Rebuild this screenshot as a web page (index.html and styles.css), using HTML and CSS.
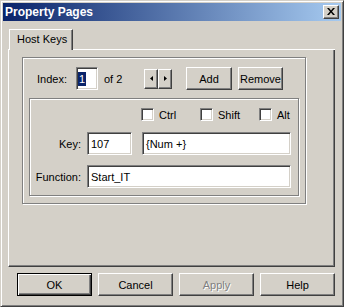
FILE: index.html
```html
<!DOCTYPE html>
<html lang="en">
<head>
    <meta charset="UTF-8">
    <title>Property Pages</title>
    <link rel="stylesheet" href="styles.css">
</head>
<body>
    <div class="window">
        <div class="titlebar">
            <span class="title">Property Pages</span>
            <div class="close-btn">
                <svg width="8" height="7" viewBox="0 0 8 7">
                    <path d="M0 0h2l2 2.5L6 0h2L5 3.5 8 7H6L4 4.5 2 7H0l3-3.5z" fill="#000"/>
                </svg>
            </div>
        </div>

        <div class="tabstrip">
            <div class="tab-edge"></div>
            <div class="tab">Host Keys</div>
            <div class="tab-fill"></div>
        </div>

        <div class="panel">
            <div class="group outer-group">
                <div class="index-row">
                    <span class="index-label">Index:</span>
                    <div class="field index-field"><span class="selected">1</span></div>
                    <span class="of-label">of 2</span>
                    <div class="spin">
                        <div class="spin-btn">
                            <svg width="3" height="5" viewBox="0 0 3 5"><path d="M3 0v5L0 2.5z" fill="#000"/></svg>
                        </div>
                        <div class="spin-btn">
                            <svg width="3" height="5" viewBox="0 0 3 5"><path d="M0 0v5l3-2.5z" fill="#000"/></svg>
                        </div>
                    </div>
                    <div class="btn add-btn">Add</div>
                    <div class="btn remove-btn">Remove</div>
                </div>

                <div class="group inner-group">
                    <div class="check-row">
                        <label class="check"><span class="box"></span>Ctrl</label>
                        <label class="check"><span class="box"></span>Shift</label>
                        <label class="check"><span class="box"></span>Alt</label>
                    </div>
                    <div class="form-row key-row">
                        <span class="form-label">Key:</span>
                        <div class="field key-field">107</div>
                        <div class="field name-field">{Num +}</div>
                    </div>
                    <div class="form-row func-row">
                        <span class="form-label">Function:</span>
                        <div class="field func-field">Start_IT</div>
                    </div>
                </div>
            </div>
        </div>

        <div class="button-row">
            <div class="btn dlg-btn default">OK</div>
            <div class="btn dlg-btn">Cancel</div>
            <div class="btn dlg-btn disabled">Apply</div>
            <div class="btn dlg-btn">Help</div>
        </div>
    </div>
</body>
</html>
```

FILE: styles.css
```css
body {
    margin: 0;
    padding: 0;
    font-family: "Liberation Sans", Arial, sans-serif;
    font-size: 11px;
    color: #000;
    background-color: #d4d0c8;
}

.window {
    width: 344px;
    height: 307px;
    box-sizing: border-box;
    background-color: #d4d0c8;
    border: 1px solid;
    border-color: #d4d0c8 #404040 #404040 #d4d0c8;
    box-shadow: inset 1px 1px #fff, inset -1px -1px #808080;
    padding: 2px;
}

.titlebar {
    height: 18px;
    display: flex;
    align-items: center;
    justify-content: space-between;
    padding: 0 2px;
    background: linear-gradient(to right, #0a246a, #a6caf0);
}

.title {
    color: #fff;
    font-weight: bold;
    font-size: 12px;
}

.close-btn {
    width: 16px;
    height: 14px;
    box-sizing: border-box;
    background-color: #d4d0c8;
    border: 1px solid;
    border-color: #fff #404040 #404040 #fff;
    box-shadow: inset -1px -1px #808080;
    display: flex;
    align-items: center;
    justify-content: center;
    padding: 0 1px 1px 0;
}

/* tabs */
.tabstrip {
    display: flex;
    margin: 8px 6px 0 5px;
    height: 21px;
}

.tab-edge {
    width: 1px;
    border-bottom: 1px solid #fff;
}

.tab {
    width: 64px;
    box-sizing: border-box;
    border: 1px solid;
    border-bottom: none;
    border-color: #fff #404040 #fff #fff;
    box-shadow: inset -1px 0 #808080;
    padding: 3px 0 0 7px;
}

.tab-fill {
    flex: 1;
    border-bottom: 1px solid #fff;
}

.panel {
    margin: 0 6px 0 5px;
    height: 217px;
    box-sizing: border-box;
    border-left: 1px solid #fff;
    border-right: 1px solid #404040;
    border-bottom: 1px solid #404040;
    box-shadow: inset -1px -1px #808080;
    padding: 7px 0 0 13px;
}

/* etched group boxes */
.group {
    box-sizing: border-box;
    border: 1px solid #808080;
    box-shadow: inset 1px 1px #fff, 1px 1px #fff;
}

.outer-group {
    width: 284px;
    height: 147px;
    padding: 9px 0 0 14px;
}

.index-row {
    display: flex;
    align-items: center;
    height: 23px;
}

.index-label {
    width: 39px;
}

.of-label {
    width: 40px;
    margin-left: 6px;
}

.spin {
    display: flex;
    height: 20px;
}

.spin-btn {
    width: 14px;
    height: 20px;
    box-sizing: border-box;
    border: 1px solid;
    border-color: #fff #404040 #404040 #fff;
    box-shadow: inset -1px -1px #808080;
    display: flex;
    align-items: center;
    justify-content: center;
}

.add-btn {
    width: 46px;
    margin-left: 14px;
}

.remove-btn {
    width: 45px;
    margin-left: 6px;
}

.inner-group {
    width: 270px;
    height: 98px;
    margin: 8px 0 0 -8px;
    padding: 9px 0 0 0;
}

.check-row {
    display: flex;
    padding-left: 111px;
    height: 13px;
}

.check {
    display: flex;
    align-items: center;
    gap: 5px;
    width: 59px;
}

.check:last-child {
    width: auto;
}

.box {
    width: 13px;
    height: 13px;
    box-sizing: border-box;
    background: #fff;
    border: 1px solid;
    border-color: #808080 #fff #fff #808080;
    box-shadow: inset 1px 1px #404040, inset -1px -1px #d4d0c8;
}

.form-row {
    display: flex;
    align-items: center;
    height: 23px;
}

.key-row {
    margin-top: 11px;
}

.func-row {
    margin-top: 10px;
}

.form-label {
    width: 51px;
    text-align: right;
    margin-right: 6px;
}

/* sunken fields */
.field {
    height: 23px;
    box-sizing: border-box;
    background: #fff;
    border: 1px solid;
    border-color: #808080 #fff #fff #808080;
    box-shadow: inset 1px 1px #404040, inset -1px -1px #d4d0c8;
    display: flex;
    align-items: center;
    padding-left: 3px;
}

.index-field {
    width: 22px;
    padding-left: 1px;
}

.selected {
    background: #0a246a;
    color: #fff;
    padding: 1px 1px;
}

.key-field {
    width: 45px;
}

.name-field {
    width: 149px;
    margin-left: 10px;
}

.func-field {
    width: 204px;
}

/* buttons */
.btn {
    height: 23px;
    box-sizing: border-box;
    background-color: #d4d0c8;
    border: 1px solid;
    border-color: #fff #404040 #404040 #fff;
    box-shadow: inset -1px -1px #808080;
    display: flex;
    align-items: center;
    justify-content: center;
}

.button-row {
    display: flex;
    justify-content: flex-end;
    gap: 6px;
    padding-right: 6px;
    margin-top: 6px;
}

.dlg-btn {
    width: 75px;
}

.dlg-btn.default {
    border-color: #000;
    box-shadow: inset 1px 1px #fff, inset -1px -1px #404040, inset -2px -2px #808080;
}

.dlg-btn.disabled {
    color: #808080;
    text-shadow: 1px 1px #fff;
}
```
